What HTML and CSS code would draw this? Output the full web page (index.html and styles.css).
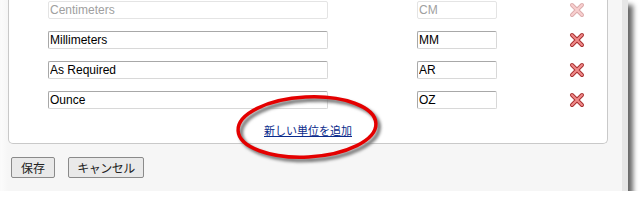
FILE: index.html
```html
<!DOCTYPE html>
<html>
<head>
    <title>Units</title>
    <link rel="stylesheet" href="styles.css">
</head>
<body>
<div class="dialog">
    <div class="panel">
        <div class="unit-row">
            <input class="unit-name" type="text" value="Centimeters" disabled>
            <input class="unit-code" type="text" value="CM" disabled>
            <span class="remove disabled"><svg width="16" height="16" viewBox="0 0 16 16"><path d="M3 3L13 13M13 3L3 13" stroke="#a83030" stroke-width="4" stroke-linecap="round"/><path d="M3 3L13 13M13 3L3 13" stroke="#f08a8a" stroke-width="2" stroke-linecap="round"/></svg></span>
        </div>
        <div class="unit-row">
            <input class="unit-name" type="text" value="Millimeters">
            <input class="unit-code" type="text" value="MM">
            <span class="remove"><svg width="16" height="16" viewBox="0 0 16 16"><path d="M3 3L13 13M13 3L3 13" stroke="#a83030" stroke-width="4" stroke-linecap="round"/><path d="M3 3L13 13M13 3L3 13" stroke="#f08a8a" stroke-width="2" stroke-linecap="round"/></svg></span>
        </div>
        <div class="unit-row">
            <input class="unit-name" type="text" value="As Required">
            <input class="unit-code" type="text" value="AR">
            <span class="remove"><svg width="16" height="16" viewBox="0 0 16 16"><path d="M3 3L13 13M13 3L3 13" stroke="#a83030" stroke-width="4" stroke-linecap="round"/><path d="M3 3L13 13M13 3L3 13" stroke="#f08a8a" stroke-width="2" stroke-linecap="round"/></svg></span>
        </div>
        <div class="unit-row">
            <input class="unit-name" type="text" value="Ounce">
            <input class="unit-code" type="text" value="OZ">
            <span class="remove"><svg width="16" height="16" viewBox="0 0 16 16"><path d="M3 3L13 13M13 3L3 13" stroke="#a83030" stroke-width="4" stroke-linecap="round"/><path d="M3 3L13 13M13 3L3 13" stroke="#f08a8a" stroke-width="2" stroke-linecap="round"/></svg></span>
        </div>
        <div class="add-line">
            <a href="#" class="add-link">新しい単位を追加</a>
            <svg class="callout" width="164" height="80" viewBox="0 0 164 80">
                <defs>
                    <filter id="soft" x="-20%" y="-20%" width="140%" height="140%">
                        <feGaussianBlur stdDeviation="1.6"/>
                    </filter>
                </defs>
                <ellipse cx="84" cy="41" rx="69" ry="30" fill="none" stroke="#777" stroke-width="4" filter="url(#soft)" transform="rotate(-3 84 41)"/>
                <ellipse cx="81" cy="38" rx="69" ry="30" fill="none" stroke="#e40000" stroke-width="3.5" transform="rotate(-3 81 38)"/>
            </svg>
        </div>
    </div>
    <div class="buttons">
        <button class="btn btn-save">保存</button>
        <button class="btn btn-cancel">キャンセル</button>
    </div>
</div>
</body>
</html>
```

FILE: styles.css
```css
body {
    margin: 0;
    background: #fff;
    overflow: hidden;
}
.dialog {
    width: 622px;
    height: 191px;
    background: linear-gradient(to right, #fcfcfc 0, #f6f6f6 8px, #f6f6f6 100%);
    border-right: 6px solid #e6e6e6;
    box-shadow: 1px 0 0 #fafafa inset, 5px 5px 5px rgba(0, 0, 0, 0.6);
    display: flex;
    flex-direction: column;
}
.panel {
    margin-left: 8px;
    width: 598px;
    height: 142px;
    background: #fff;
    border: 1px solid #c9c9c9;
    border-top: none;
    border-radius: 0 0 5px 5px;
    padding-top: 1px;
    box-sizing: content-box;
}
.unit-row {
    display: flex;
    align-items: flex-start;
    height: 30px;
}
.unit-name, .unit-code {
    box-sizing: border-box;
    height: 18px;
    border: 1px solid #a8a8a8;
    border-bottom-color: #d8d8d8;
    border-right-color: #d8d8d8;
    border-radius: 2px;
    padding: 0 1px;
    font-family: "Liberation Sans", Arial, sans-serif;
    font-size: 12px;
    color: #000;
    background: #fff;
}
.unit-name {
    margin-left: 39px;
    width: 280px;
}
.unit-code {
    margin-left: 89px;
    width: 80px;
}
.unit-name:disabled, .unit-code:disabled {
    color: #a0a0a0;
    border-color: #e4e4e4;
}
.remove {
    margin-left: 72px;
    width: 16px;
    height: 16px;
    margin-top: 1px;
}
.remove.disabled {
    opacity: 0.4;
}
.add-line {
    position: relative;
    text-align: center;
    padding-top: 0;
}
.add-link {
    font-family: "Noto Sans CJK JP", sans-serif;
    font-size: 11px;
    color: #0a2b8c;
    text-decoration: underline;
    line-height: 14px;
}
.callout {
    position: absolute;
    left: 217px;
    top: -32px;
    pointer-events: none;
}
.buttons {
    display: flex;
    gap: 13px;
    margin: 13px 0 0 11px;
}
.btn {
    height: 21px;
    padding: 0;
    border: 1px solid #8a8a8a;
    border-radius: 2px;
    background: #e9e9e9;
    font-family: "Noto Sans CJK JP", sans-serif;
    font-size: 12px;
    line-height: 17px;
    color: #222;
}
.btn-save {
    width: 44px;
}
.btn-cancel {
    width: 76px;
    letter-spacing: -0.5px;
}
```
